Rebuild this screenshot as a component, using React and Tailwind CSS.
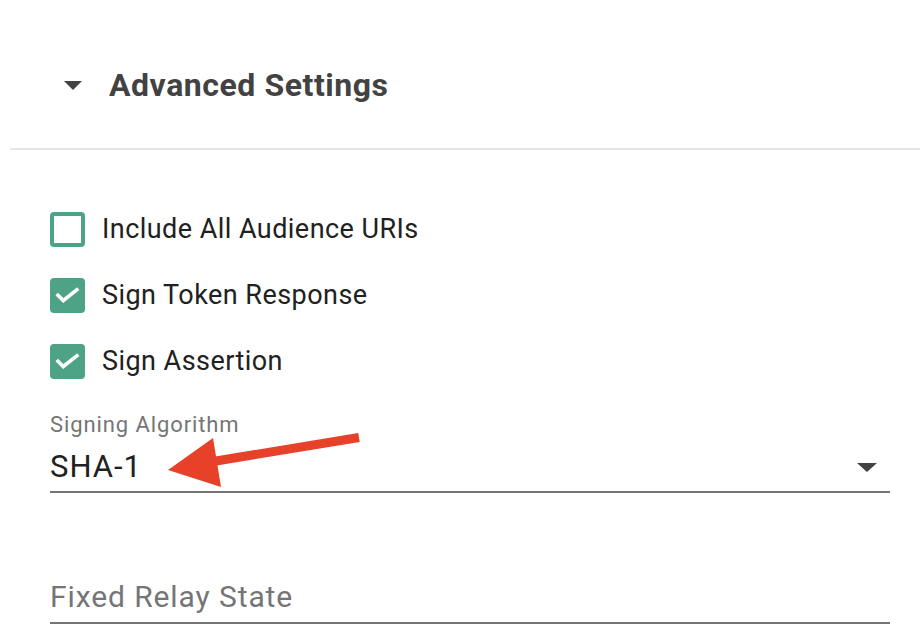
import React from 'react';

const Checkbox = ({ checked }) =>
  checked ? (
    <span className="w-[35px] h-[35px] rounded-[4px] bg-[#4ea386] flex items-center justify-center shrink-0">
      <svg width="35" height="35" viewBox="0 0 35 35">
        <polyline points="6.7,16 13.3,22.5 28.3,10.7" fill="none" stroke="#fff" strokeWidth="3.6" />
      </svg>
    </span>
  ) : (
    <span className="w-[35px] h-[35px] rounded-[4px] border-[4px] border-[#4ea386] bg-white shrink-0" />
  );

const Row = ({ checked, label }) => (
  <div className="h-[66px] flex items-center gap-[17px]">
    <Checkbox checked={checked} />
    <span className="text-[27px] leading-none tracking-[0.45px] text-[#212121]">{label}</span>
  </div>
);

export default function App() {
  return (
    <div className="w-[920px] h-[644px] bg-white relative overflow-hidden font-['Roboto',sans-serif]">
      {/* header */}
      <div className="h-[148px] pt-[22px] pl-[64px] flex items-center">
        <svg width="18" height="9" viewBox="0 0 18 9" className="mr-[27px]">
          <polygon points="0,0 18,0 9,9" fill="#424242" />
        </svg>
        <h3 className="text-[32px] font-bold text-[#424242] tracking-[0.55px]">Advanced Settings</h3>
      </div>
      <div className="ml-[10px] h-[2px] bg-[#e6e6e6]" />

      <div className="pl-[50px] pr-[30px] pt-[46px]">
        <Row checked={false} label="Include All Audience URIs" />
        <Row checked label="Sign Token Response" />
        <Row checked label="Sign Assertion" />

        <div className="mt-[19px] text-[22px] leading-[24px] tracking-[0.9px] text-[#757575]">Signing Algorithm</div>
        <div className="mt-[13px] pb-[7px] border-b-2 border-[#757575] flex items-center justify-between">
          <span className="text-[31px] leading-[34px] tracking-[1px] text-[#212121]">SHA-1</span>
          <svg width="20" height="9" viewBox="0 0 20 9" className="mr-[13px]">
            <polygon points="0,0 20,0 10,9" fill="#424242" />
          </svg>
        </div>

        <div className="mt-[87px] pb-[8px] border-b-2 border-[#757575]">
          <span className="text-[30px] leading-[34px] tracking-[0.9px] text-[#757575]">Fixed Relay State</span>
        </div>
      </div>

      {/* annotation arrow */}
      <svg className="absolute left-0 top-0 pointer-events-none" width="920" height="644">
        <line x1="216" y1="461" x2="359" y2="437.5" stroke="#e8412a" strokeWidth="9" />
        <polygon points="213,438 168,470 221,487" fill="#e8412a" />
      </svg>
    </div>
  );
}
